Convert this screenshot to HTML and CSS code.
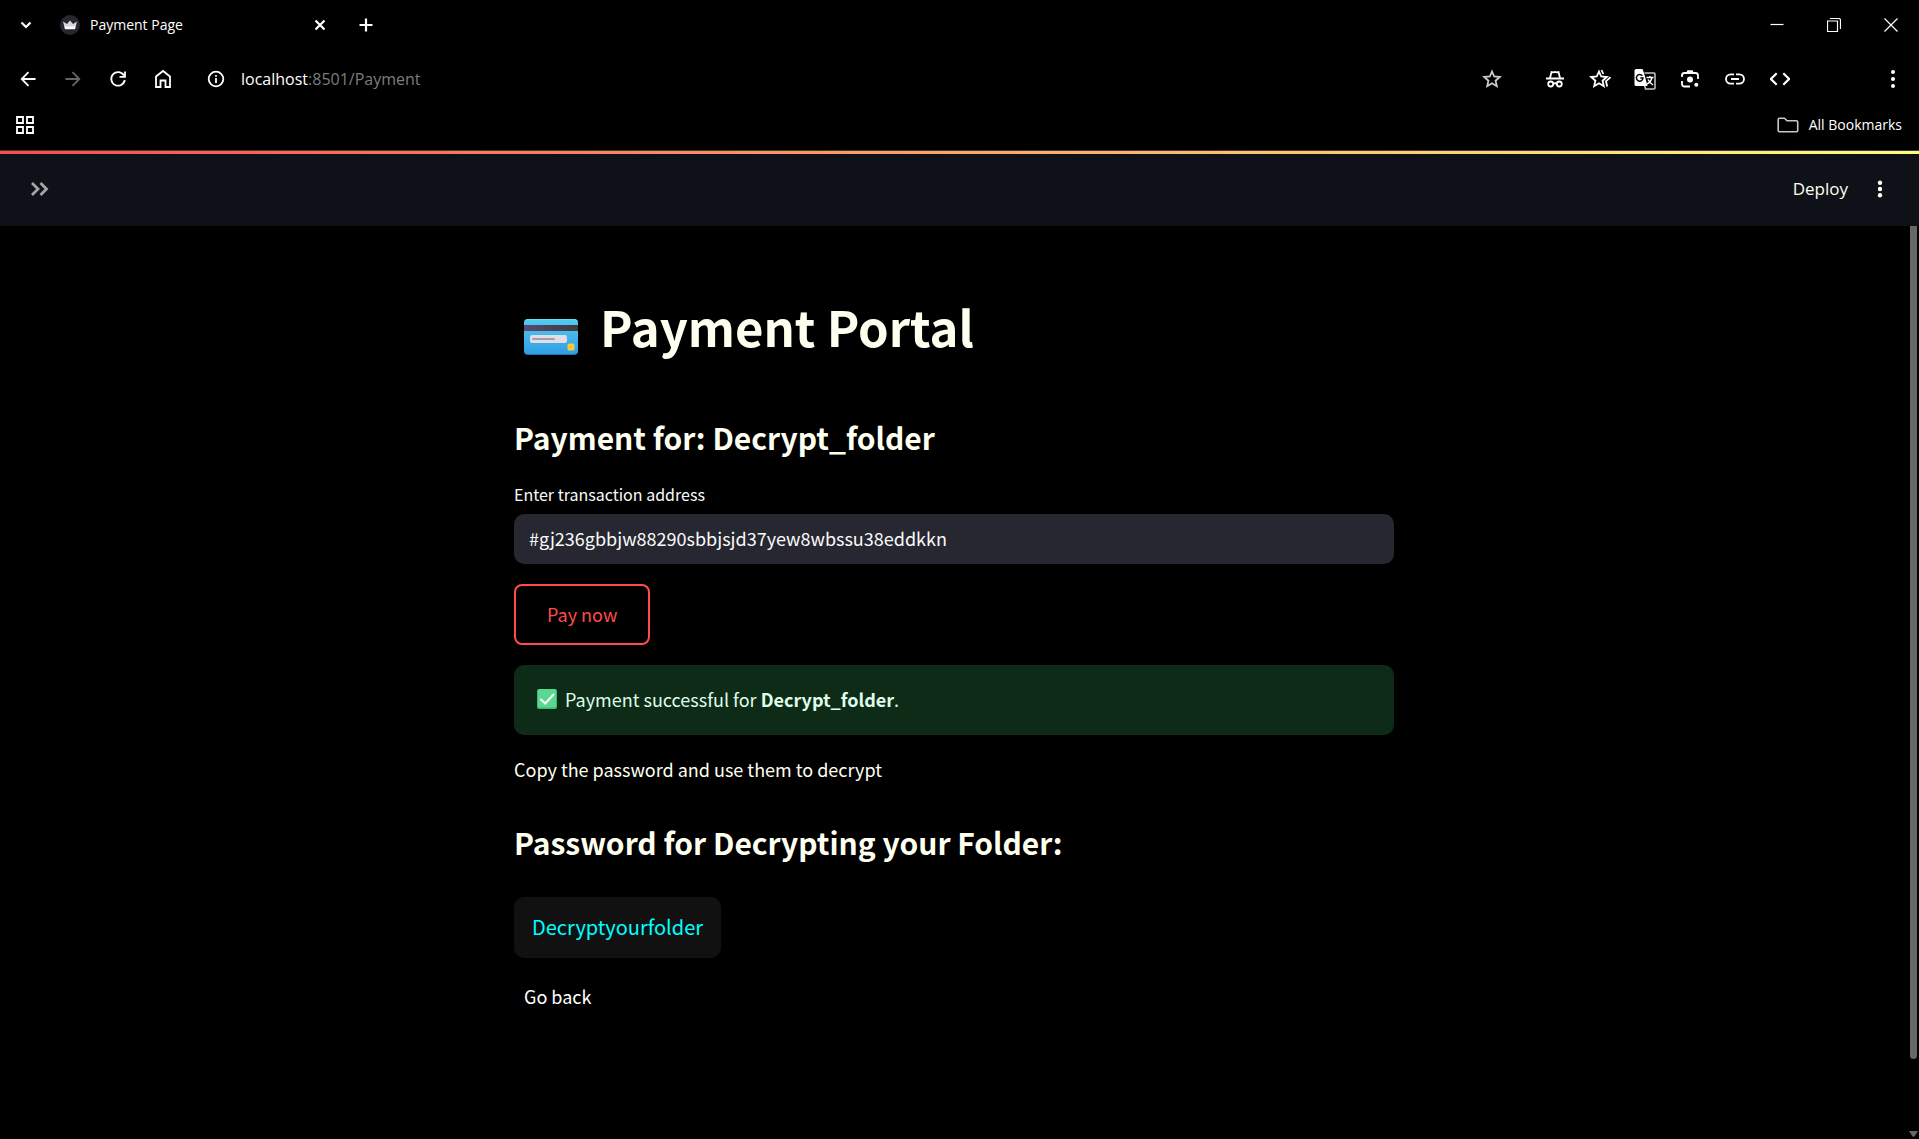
FILE: index.html
```html
<!DOCTYPE html>
<html lang="en">
<head>
<meta charset="utf-8">
<meta name="viewport" content="width=device-width, initial-scale=1">
<title>Payment Page</title>
<link rel="stylesheet" href="styles.css">
</head>
<body>
<div class="browser">
  <div class="tab-strip">
    <button class="icon-btn tab-search" aria-label="Search tabs">
      <svg width="12" height="8" viewBox="0 0 12 8"><path d="M1.5 1.5 6 6l4.500-4.500" class="line bold"/></svg>
    </button>
    <div class="tab">
      <svg class="favicon" width="20" height="20" viewBox="0 0 20 20">
        <circle cx="10" cy="10" r="10" fill="#262730"/>
        <path d="M3 6.500 7 9l3-3.500L13 9l4-2.500-2 7.500H5z" fill="#d8d8dc"/>
        <path d="M4.400 11.500h11.200l-.700 2.700H5.100z" fill="#fff"/>
      </svg>
      <span class="tab-title">Payment Page</span>
      <button class="icon-btn tab-close" aria-label="Close tab">
        <svg width="12" height="12" viewBox="0 0 12 12"><path d="m1.500 1.500 9 9m0-9-9 9" class="line bold"/></svg>
      </button>
    </div>
    <button class="icon-btn new-tab" aria-label="New tab">
      <svg width="14" height="14" viewBox="0 0 14 14"><path d="M7 .500v13M.500 7h13" class="line bold"/></svg>
    </button>
    <div class="window-controls">
      <button class="icon-btn window-btn" aria-label="Minimize">
        <svg width="14" height="14" viewBox="0 0 14 14"><path d="M.500 6.500h13" class="line thin"/></svg>
      </button>
      <button class="icon-btn window-btn" aria-label="Restore">
        <svg width="14" height="14" viewBox="0 0 14 14"><path d="M.500 3h10v10.500H.500zM3 .500h8.500a2 2 0 0 1 2 2V11" class="line thin"/></svg>
      </button>
      <button class="icon-btn window-btn" aria-label="Close window">
        <svg width="14" height="14" viewBox="0 0 14 14"><path d="m.500.500 13 13m0-13-13 13" class="line thin"/></svg>
      </button>
    </div>
  </div>

  <div class="toolbar">
    <button class="icon-btn tool" aria-label="Back">
      <svg width="16" height="16" viewBox="0 0 16 16"><path d="M15.500 8H2M8.500 1.200 1.700 8l6.800 6.800" class="line"/></svg>
    </button>
    <button class="icon-btn tool dim" aria-label="Forward">
      <svg width="16" height="16" viewBox="0 0 16 16"><path d="M.500 8H14M7.500 1.200 14.300 8l-6.800 6.800" class="line"/></svg>
    </button>
    <button class="icon-btn tool" aria-label="Reload">
      <svg width="18" height="18" viewBox="0 0 18 18"><path d="M15 5.500A6.800 6.800 0 1 0 15.800 10M16 1.500V6.800h-5.500" class="line"/></svg>
    </button>
    <button class="icon-btn tool" aria-label="Home">
      <svg width="18" height="20" viewBox="0 0 18 20"><path d="M2 7.500 9 2l7 5.500V18h-4.500v-6.500h-5V18H2z" class="line"/></svg>
    </button>
    <button class="icon-btn site-info" aria-label="Site information">
      <svg width="18" height="18" viewBox="0 0 18 18"><circle cx="9" cy="9" r="7.300" class="line"/><path d="M9 8v5M9 5v1.800" class="line"/></svg>
    </button>
    <div class="url" role="textbox" aria-label="Address" contenteditable="true" spellcheck="false">localhost<span class="url-path">:8501/Payment</span></div>
    <button class="icon-btn bookmark" aria-label="Bookmark this tab">
      <svg width="20" height="20" viewBox="0 0 20 20"><path d="m10 2.500 2.200 5 5.600.500-4.200 3.700 1.200 5.500-4.800-2.900-4.800 2.900 1.200-5.500L2.200 8l5.600-.500z" class="line" stroke-width="1.600"/></svg>
    </button>
    <button class="icon-btn tool" aria-label="Incognito">
      <svg width="20" height="20" viewBox="0 0 20 20"><path d="M1 9.500h18M5 9l1.500-6 2 .400L10 3l1.500.400 2-.400L15 9M8.300 14.700q1.700-.900 3.400 0" class="line"/><circle cx="5.700" cy="15" r="2.500" class="line"/><circle cx="14.300" cy="15" r="2.500" class="line"/></svg>
    </button>
    <button class="icon-btn tool" aria-label="Reading list">
      <svg width="22" height="20" viewBox="0 0 22 20"><path d="m10 2.500 2.200 5 5.600.500-4.200 3.700 1.200 5.500-4.800-2.900-4.800 2.900 1.200-5.500L2.200 8l5.600-.500zM12.500 1l1.800 4M21.500 8.200 17 12.200l1.200 5.300" class="line"/></svg>
    </button>
    <button class="icon-btn tool" aria-label="Translate">
      <svg width="22" height="22" viewBox="0 0 22 22"><path d="M10.500 5H20a1 1 0 0 1 1 1v14a1 1 0 0 1-1 1h-8.500l-1-4" fill="none" stroke="#c8c8c8" stroke-width="1.500"/><path d="M1.500 1h7l1.500 4 3.500 13H2A1.500 1.500 0 0 1 .500 16.500v-14z" fill="#fff"/><path d="M8.300 7.800A3.300 3.300 0 1 0 9 10H6.300" fill="none" stroke="#000" stroke-width="1.500"/><path d="M12.500 9.500h7M16 8v1.500M18 9.500c-.800 3.500-3 5.500-5 6.500M14 11.500c1 2 2.500 4 5 5.500" fill="none" stroke="#fff" stroke-width="1.400"/></svg>
    </button>
    <button class="icon-btn tool" aria-label="Search with Lens">
      <svg width="20" height="20" viewBox="0 0 20 20"><path d="M2 8V6.500a2.500 2.500 0 0 1 2.500-2.500h11A2.500 2.500 0 0 1 18 6.500V10M2 12v3a2.500 2.500 0 0 0 2.500 2.500H10M7 3.200h6" class="line"/><path d="M7.500 1.200h5L14 4H6z" fill="#fff"/><circle cx="10" cy="10.500" r="3" fill="#fff"/><circle cx="16.300" cy="15.800" r="2" fill="#fff"/></svg>
    </button>
    <button class="icon-btn tool" aria-label="Copy link">
      <svg width="20" height="12" viewBox="0 0 20 12"><path d="M9 1.300H5.700a4.700 4.700 0 0 0 0 9.400H9M11 1.300h3.300a4.700 4.700 0 0 1 0 9.400H11M6 6h8" class="line"/></svg>
    </button>
    <button class="icon-btn tool" aria-label="Developer tools">
      <svg width="20" height="14" viewBox="0 0 20 14"><path d="M6.700 1.200.900 7l5.800 5.800M13.300 1.200 19.100 7l-5.800 5.800" class="line bold"/></svg>
    </button>
    <button class="icon-btn tool browser-menu" aria-label="Browser menu">
      <svg width="6" height="20" viewBox="0 0 6 20"><circle cx="3" cy="3" r="2" fill="#fff"/><circle cx="3" cy="10" r="2" fill="#fff"/><circle cx="3" cy="17" r="2" fill="#fff"/></svg>
    </button>
  </div>

  <div class="bookmarks">
    <button class="icon-btn" aria-label="Apps">
      <svg width="20" height="20" viewBox="0 0 20 20"><path d="M2 2h6v6H2zM12 2h6v6h-6zM2 12h6v6H2zM12 12h6v6h-6z" class="line"/></svg>
    </button>
    <button class="all-bookmarks">
      <svg width="22" height="16" viewBox="0 0 22 16"><path d="M2.500 1.200h5l2.500 2.500h9.500q1.200 0 1.200 1.200v8.600q0 1.300-1.200 1.300h-17q-1.300 0-1.300-1.300v-11q0-1.300 1.300-1.300z" fill="none" stroke="#c7c7c7" stroke-width="1.600"/></svg>
      <span>All Bookmarks</span>
    </button>
  </div>
</div>

<div class="decoration"></div>
<header class="app-header">
  <button class="icon-btn" aria-label="Open sidebar">
    <svg width="20" height="16" viewBox="0 0 20 16"><path d="m2 2 6 6-6 6M10.500 2l6 6-6 6" fill="none" stroke="#a3a5a8" stroke-width="2.800"/></svg>
  </button>
  <div class="header-actions">
    <button class="deploy">Deploy</button>
    <button class="icon-btn" aria-label="App menu">
      <svg width="6" height="18" viewBox="0 0 6 18"><circle cx="3" cy="2.700" r="2.200" fill="#fffff0"/><circle cx="3" cy="9" r="2.200" fill="#fffff0"/><circle cx="3" cy="15.300" r="2.200" fill="#fffff0"/></svg>
    </button>
  </div>
</header>

<div class="view">
  <main class="content">
    <div class="column">
      <h1>
        <svg width="54" height="36" viewBox="0 0 54 36" role="img" aria-label="Credit card">
          <defs>
            <linearGradient id="card" x1="0" y1="0" x2="0" y2="1"><stop offset="0" stop-color="#51cdf0"/><stop offset="1" stop-color="#329de5"/></linearGradient>
            <linearGradient id="strip" x1="0" y1="0" x2="1" y2="0"><stop offset="0" stop-color="#5c4870"/><stop offset="1" stop-color="#3d3b40"/></linearGradient>
          </defs>
          <rect width="54" height="36" rx="4" fill="#2275b5"/>
          <rect width="54" height="35" rx="4" fill="url(#card)"/>
          <path d="M1 2q1-1.500 3-1.500h46q2 0 3 1.500" fill="none" stroke="#65def2"/>
          <path d="M0 6h54v6H0z" fill="url(#strip)"/>
          <rect x="6" y="16" width="37" height="8" rx="2" fill="#e1dce5"/>
          <path d="M9 20h21" stroke="#a49ea8" stroke-width="2" stroke-linecap="round"/>
          <rect x="43.500" y="24.500" width="7" height="7" rx="1.500" fill="#f6c83b"/>
        </svg>
        <span>Payment Portal</span>
      </h1>
      <h2>Payment for: Decrypt_folder</h2>
      <form class="payment" onsubmit="return false">
        <label for="address">Enter transaction address</label>
        <input id="address" type="text" value="#gj236gbbjw88290sbbjsjd37yew8wbssu38eddkkn" spellcheck="false">
        <button class="pay" type="button">Pay now</button>
      </form>
      <div class="alert" role="status">
        <svg width="20" height="20" viewBox="0 0 20 20" role="img" aria-label="Done"><rect width="20" height="20" rx="2" fill="#3fb87b"/><rect x="1" width="18" height="18.500" rx="1.500" fill="#5ad790"/><path d="m4 10.500 4.200 4L16.500 5.500" fill="none" stroke="#fff" stroke-width="2" stroke-linecap="round"/></svg>
        <p>Payment successful for <strong>Decrypt_folder</strong>.</p>
      </div>
      <p class="hint">Copy the password and use them to decrypt</p>
      <h2 class="password-title">Password for Decrypting your Folder:</h2>
      <div class="password">Decryptyourfolder</div>
      <a class="back" href="#">Go back</a>
    </div>
  </main>
  <div class="scrollbar" aria-hidden="true">
    <div class="thumb"></div>
    <svg width="9" height="6" viewBox="0 0 9 6"><path d="M0 0h9L5.500 5.500h-2z" fill="#686868"/></svg>
  </div>
</div>
</body>
</html>
```
FILE: styles.css
```css
:root {
  --ui: "Open Sans", "Noto Sans", sans-serif;
  --app: "Noto Sans CJK SC", "Noto Sans", sans-serif;
  --ivory: #fffff0;
}

* { box-sizing: border-box; }

body {
  margin: 0;
  min-height: 100vh;
  display: flex;
  flex-direction: column;
  background: #000;
  color: var(--ivory);
  font-family: var(--app);
  font-size: 18px;
}

h1, h2, p { margin: 0; }

button {
  border: 0;
  padding: 0;
  background: none;
  color: inherit;
  font: inherit;
  cursor: pointer;
}

svg { display: block; flex: none; }

.line { fill: none; stroke: #fff; stroke-width: 1.8; }
.bold { stroke-width: 2.2; }
.thin { stroke-width: 1.2; }

.icon-btn {
  display: flex;
  align-items: center;
  justify-content: center;
  flex: none;
  width: 28px;
  height: 28px;
}

/* Browser frame */
.browser {
  color: #fff;
  font-family: var(--ui);
  border-bottom: 1px solid #3c3c3c;
}

.tab-strip { display: flex; align-items: center; height: 50px; padding-left: 12px; }
.tab { display: flex; align-items: center; width: 274px; margin-left: 20px; }
.tab-title { flex: 1; margin-left: 10px; font-size: 14px; line-height: 20px; }
.new-tab { margin-left: 18px; }
.window-controls { display: flex; margin-left: auto; }
.window-btn { width: 57px; }

.toolbar { display: flex; align-items: center; height: 58px; padding: 0 4px 0 5px; }
.tool { width: 45px; }
.dim { opacity: .4; }
.site-info { margin-left: 17px; }
.url { flex: 1; margin-left: 11px; font-size: 16px; line-height: 24px; outline: 0; }
.url-path { color: #7c7c7c; }
.bookmark { margin-right: 26px; opacity: .8; }
.browser-menu { margin-left: 68px; }

.bookmarks {
  display: flex;
  align-items: center;
  justify-content: space-between;
  height: 42px;
  padding: 0 17px 8px 11px;
}
.all-bookmarks { display: flex; align-items: center; gap: 10px; font-size: 14px; line-height: 20px; }

/* App header */
.decoration { height: 3px; background: linear-gradient(90deg, #ff4b4b, #fffd80); }
.app-header {
  display: flex;
  align-items: center;
  justify-content: space-between;
  height: 72px;
  padding: 0 25px 2px 26px;
  background: #0e1117;
}
.header-actions { display: flex; align-items: center; gap: 18px; }
.deploy { font-family: var(--ui); font-size: 17px; line-height: 24px; }

/* Page */
.view { display: flex; flex: 1; }
.content { flex: 1; padding: 67px 20px 60px; }
.column {
  display: flex;
  flex-direction: column;
  align-items: flex-start;
  max-width: 880px;
  margin: 0 auto;
}

h1 {
  display: flex;
  align-items: center;
  gap: 22px;
  padding-left: 10px;
  font-size: 49px;
  font-weight: 700;
  line-height: 66px;
}
h1 svg { margin-top: 22px; }

h2 { margin-top: 57px; font-size: 30px; font-weight: 700; line-height: 42px; }

.payment { display: flex; flex-direction: column; align-items: flex-start; width: 100%; margin-top: 24px; }
.payment label { color: #fafafa; font-size: 16px; line-height: 24px; }
.payment input {
  width: 100%;
  height: 50px;
  margin-top: 8px;
  padding: 0 15px 2px;
  border: 0;
  border-radius: 10px;
  outline: 0;
  background: #262730;
  color: #fafafa;
  font: inherit;
}
.pay {
  margin-top: 20px;
  padding: 0 31px 2px;
  height: 61px;
  border: 2px solid #ff4b4b;
  border-radius: 8px;
  color: #ff4b4b;
}

.alert {
  display: flex;
  align-items: center;
  gap: 8px;
  width: 100%;
  height: 70px;
  margin-top: 20px;
  padding: 0 23px 2px;
  border-radius: 10px;
  background: #0e2b18;
  color: #dffde9;
}
.alert strong { font-weight: 700; }

.hint { margin-top: 18px; line-height: 32px; }
.password-title { margin-top: 36px; }
.password {
  margin-top: 34px;
  padding: 0 18px 1px;
  border-radius: 10px;
  background: #111;
  color: #0ff;
  font-size: 20px;
  line-height: 60px;
}
.back { margin-top: 13px; padding: 0 10px; color: #fff; line-height: 50px; text-decoration: none; }

.scrollbar {
  display: flex;
  flex-direction: column;
  align-items: center;
  justify-content: space-between;
  width: 11px;
  padding-bottom: 2px;
}
.thumb { width: 7px; height: calc(92% - 5px); border-radius: 0 0 4px 4px; background: #686868; }
```
